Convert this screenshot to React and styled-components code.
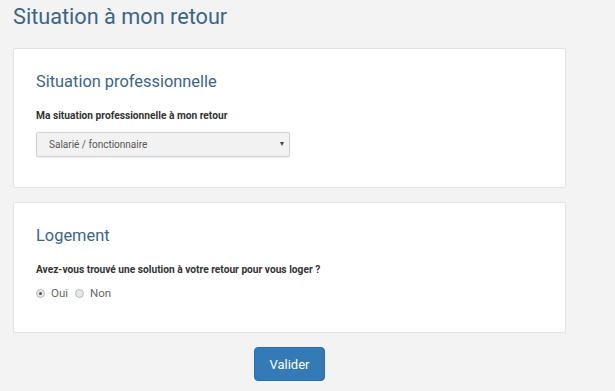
import React from 'react'
import { useState } from 'react'
import styled, { createGlobalStyle } from 'styled-components'

const GlobalStyle = createGlobalStyle`
  html, body {
    margin: 0;
    padding: 0;
    background: #f3f3f3;
    font-family: Roboto, "Liberation Sans", Arial, sans-serif;
  }
`

const Page = styled.div`
  width: 615px;
  height: 391px;
  box-sizing: border-box;
  padding: 3px 49px 0 13px;
  display: flex;
  flex-direction: column;
  overflow: hidden;
`

const Title = styled.h1`
  margin: 0 0 17px;
  font-size: 21.7px;
  line-height: 28px;
  font-weight: 400;
  color: #3b6586;
`

const Panel = styled.section`
  background: #fff;
  border: 1px solid #dde3e8;
  border-radius: 2px;
  padding: 22px 22px 28px;
  margin-bottom: 14px;
  min-height: ${p => p.$minHeight}px;
  box-sizing: border-box;
`

const PanelTitle = styled.h2`
  margin: 0 0 17px;
  font-size: 16.4px;
  line-height: 22px;
  font-weight: 400;
  color: #3b6586;
`

const Label = styled.div`
  font-size: 10.2px;
  font-weight: 700;
  color: #333;
  margin-bottom: 11px;
`

const SelectBox = styled.div`
  position: relative;
  width: 254px;
  height: 25px;
  box-sizing: border-box;
  border: 1px solid #cfd3d6;
  border-radius: 2px;
  background: #f2f2f2;
  box-shadow: 0 1px 2px rgba(0, 0, 0, 0.08);
  display: flex;
  align-items: center;
  padding: 0 12px;
  font-size: 10px;
  color: #555;
`

const Caret = styled.span`
  position: absolute;
  right: 5px;
  top: 9px;
  width: 0;
  height: 0;
  border-left: 2.5px solid transparent;
  border-right: 2.5px solid transparent;
  border-top: 4px solid #444;
`

const RadioRow = styled.div`
  display: flex;
  align-items: center;
  gap: 7px;
  font-size: 11.5px;
  color: #666;
`

const RadioItem = styled.label`
  display: flex;
  align-items: center;
  gap: 6px;
  cursor: pointer;
`

const RadioDot = styled.span`
  width: 7px;
  height: 7px;
  border-radius: 50%;
  border: 1px solid #b8b8b8;
  background: #e8e8e8;
  display: inline-flex;
  align-items: center;
  justify-content: center;
  &::after {
    content: '';
    width: 3px;
    height: 3px;
    border-radius: 50%;
    background: ${p => (p.$checked ? '#555' : 'transparent')};
  }
`

const Footer = styled.div`
  display: flex;
  justify-content: center;
`

const Button = styled.button`
  width: 71px;
  height: 34px;
  border: 1px solid #2e6da4;
  border-radius: 4px;
  background: #337ab7;
  color: #fff;
  font-family: inherit;
  font-size: 13px;
  cursor: pointer;
`

export default function App() {
  const [logement, setLogement] = useState('oui')

  return (
    <>
      <GlobalStyle />
      <Page>
        <Title>Situation à mon retour</Title>
        <Panel $minHeight={140}>
          <PanelTitle>Situation professionnelle</PanelTitle>
          <Label>Ma situation professionnelle à mon retour</Label>
          <SelectBox>
            Salarié / fonctionnaire
            <Caret />
          </SelectBox>
        </Panel>
        <Panel $minHeight={131}>
          <PanelTitle>Logement</PanelTitle>
          <Label>Avez-vous trouvé une solution à votre retour pour vous loger ?</Label>
          <RadioRow>
            <RadioItem onClick={() => setLogement('oui')}>
              <RadioDot $checked={logement === 'oui'} />
              Oui
            </RadioItem>
            <RadioItem onClick={() => setLogement('non')}>
              <RadioDot $checked={logement === 'non'} />
              Non
            </RadioItem>
          </RadioRow>
        </Panel>
        <Footer>
          <Button>Valider</Button>
        </Footer>
      </Page>
    </>
  )
}
